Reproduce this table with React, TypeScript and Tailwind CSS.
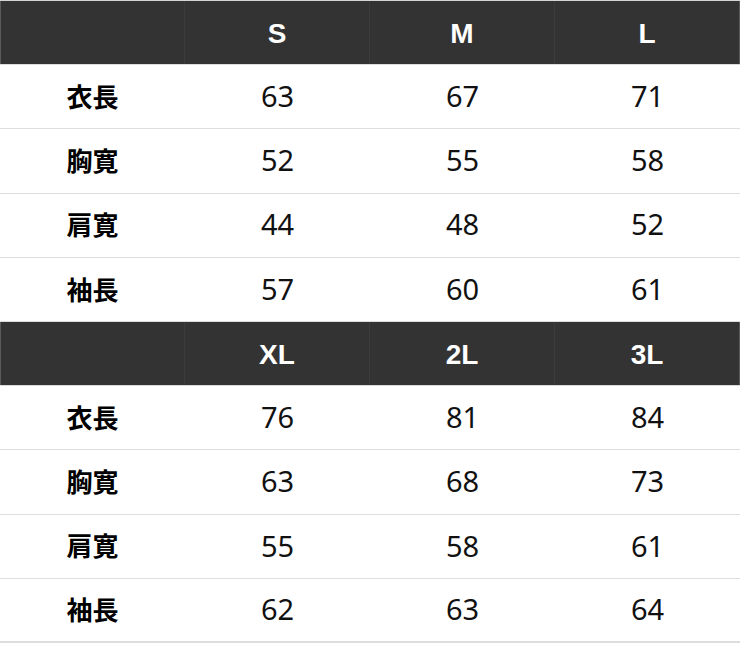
import React from "react";

const blocks = [
  {
    head: ["S", "M", "L"],
    rows: [
      ["衣長", "63", "67", "71"],
      ["胸寛", "52", "55", "58"],
      ["肩寛", "44", "48", "52"],
      ["袖長", "57", "60", "61"],
    ],
  },
  {
    head: ["XL", "2L", "3L"],
    rows: [
      ["衣長", "76", "81", "84"],
      ["胸寛", "63", "68", "73"],
      ["肩寛", "55", "58", "61"],
      ["袖長", "62", "63", "64"],
    ],
  },
];

export default function App() {
  return (
    <div className="w-[740px] h-[648px] bg-white">
      <div className="w-[740px] border-t border-[#d4d4d4]">
        {blocks.map((b, bi) => (
          <div key={bi}>
            <div className="grid grid-cols-4 h-[64px] bg-[#333333] border-b border-[#dcdcdc]">
              <div className="border-r border-[#3b3b3b] border-l border-l-[#5a5a5a]" />
              {b.head.map((h, i) => (
                <div
                  key={h}
                  className={`flex items-center justify-center pt-[2px] text-white font-bold text-[28px] font-['Liberation_Sans',Arial,sans-serif] ${i < 2 ? "border-r border-[#3b3b3b]" : "border-r border-[#5a5a5a]"}`}
                >
                  {h}
                </div>
              ))}
            </div>
            {b.rows.map((r, ri) => (
              <div
                key={ri}
                className={`grid grid-cols-4 h-[64.3px] ${bi === 1 && ri === 3 ? "border-b-2 border-[#dddddd]" : "border-b border-[#dddddd]"}`}
              >
                <div className="flex items-center justify-center pb-[3px] font-bold text-[26px] text-black font-['Noto_Sans_CJK_JP',sans-serif]">
                  {r[0]}
                </div>
                {r.slice(1).map((v, i) => (
                  <div
                    key={i}
                    className="flex items-center justify-center pb-[2px] text-[29px] text-[#111] font-['Noto_Sans',sans-serif]"
                  >
                    {v}
                  </div>
                ))}
              </div>
            ))}
          </div>
        ))}
      </div>
    </div>
  );
}
